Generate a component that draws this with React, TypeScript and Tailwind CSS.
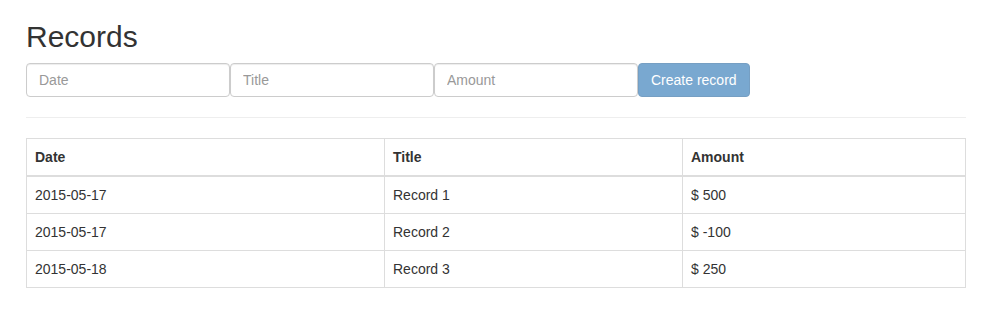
import React, { useState } from "react";

interface RecordRow {
    id: number;
    date: string;
    title: string;
    amount: number;
}

const initialRecords: RecordRow[] = [
    { id: 1, date: "2015-05-17", title: "Record 1", amount: 500 },
    { id: 2, date: "2015-05-17", title: "Record 2", amount: -100 },
    { id: 3, date: "2015-05-18", title: "Record 3", amount: 250 },
];

const inputClass =
    "w-[204px] h-[34px] px-3 py-1.5 text-sm text-[#555] bg-white border border-[#ccc] rounded-[4px] shadow-[inset_0_1px_1px_rgba(0,0,0,0.075)] outline-none placeholder:text-[#999]";

const App: React.FC = () => {
    const [records] = useState<RecordRow[]>(initialRecords);
    const [form, setForm] = useState({ date: "", title: "", amount: "" });

    const valid = form.date && form.title && form.amount;

    return (
        <div className="bg-white text-[#333] font-['Liberation_Sans',Arial,sans-serif] text-sm leading-5">
            <div className="w-[940px] mx-auto pt-5 pb-5">
                <h2 className="mb-2.5 text-[30px] leading-[33px] font-normal">Records</h2>

                {/* FORM */}
                <form className="flex" onSubmit={(e) => e.preventDefault()}>
                    <input
                        className={inputClass}
                        placeholder="Date"
                        value={form.date}
                        onChange={(e) => setForm({ ...form, date: e.target.value })}
                    />
                    <input
                        className={inputClass}
                        placeholder="Title"
                        value={form.title}
                        onChange={(e) => setForm({ ...form, title: e.target.value })}
                    />
                    <input
                        className={inputClass}
                        placeholder="Amount"
                        value={form.amount}
                        onChange={(e) => setForm({ ...form, amount: e.target.value })}
                    />
                    <button
                        type="submit"
                        disabled={!valid}
                        className="h-[34px] px-3 text-sm text-white bg-[#337ab7] border border-[#2e6da4] rounded-[4px] disabled:opacity-65"
                    >
                        Create record
                    </button>
                </form>

                <hr className="mt-5 mb-5 border-0 border-t border-[#eee]" />

                {/* TABLE */}
                <table className="w-full border-collapse border border-[#ddd]">
                    <thead>
                        <tr>
                            <th className="w-[358px] p-2 text-left font-bold border border-[#ddd] border-b-2">Date</th>
                            <th className="w-[298px] p-2 text-left font-bold border border-[#ddd] border-b-2">Title</th>
                            <th className="p-2 text-left font-bold border border-[#ddd] border-b-2">Amount</th>
                        </tr>
                    </thead>
                    <tbody>
                        {records.map((r) => (
                            <tr key={r.id}>
                                <td className="p-2 border border-[#ddd]">{r.date}</td>
                                <td className="p-2 border border-[#ddd]">{r.title}</td>
                                <td className="p-2 border border-[#ddd]">$ {r.amount}</td>
                            </tr>
                        ))}
                    </tbody>
                </table>
            </div>
        </div>
    );
};

export default App;
